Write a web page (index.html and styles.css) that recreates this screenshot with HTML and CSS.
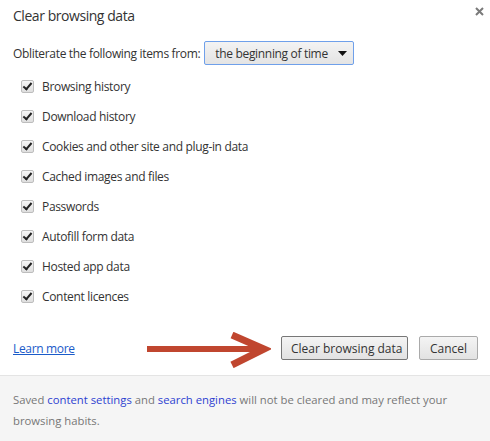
FILE: index.html
```html
<!DOCTYPE html>
<html>
<head>
<meta charset="utf-8">
<link rel="stylesheet" href="styles.css">
</head>
<body>
<div class="dialog">
  <div class="header">
    <h1 class="title">Clear browsing data</h1>
    <span class="close"><svg width="9" height="9" viewBox="0 0 9 9"><path d="M1 1L8 8M8 1L1 8" stroke="#7a7a7a" stroke-width="2"/></svg></span>
  </div>
  <div class="content">
    <div class="range">
      <span>Obliterate the following items from:</span>
      <span class="select">the beginning of time<svg class="caret" width="9" height="5" viewBox="0 0 9 5"><path d="M0 0H9L4.5 5Z" fill="#111"/></svg></span>
    </div>
    <ul class="items">
      <li><span class="cb"></span>Browsing history</li>
      <li><span class="cb"></span>Download history</li>
      <li><span class="cb"></span>Cookies and other site and plug-in data</li>
      <li><span class="cb"></span>Cached images and files</li>
      <li><span class="cb"></span>Passwords</li>
      <li><span class="cb"></span>Autofill form data</li>
      <li><span class="cb"></span>Hosted app data</li>
      <li><span class="cb"></span>Content licences</li>
    </ul>
    <div class="actions">
      <a class="learn" href="#">Learn more</a>
      <svg class="arrow" width="124" height="36" viewBox="0 0 124 36"><path d="M0 17H116" stroke="#c0462f" stroke-width="6"/><path d="M85 3L117 17L85 33" fill="none" stroke="#c0462f" stroke-width="7"/></svg>
      <button class="btn primary">Clear browsing data</button>
      <button class="btn">Cancel</button>
    </div>
  </div>
  <div class="note"><p class="note-text">Saved <a href="#">content settings</a> and <a href="#">search engines</a> will not be cleared and may reflect your<br>browsing habits.</p></div>
</div>
</body>
</html>
```
FILE: styles.css
```css
html, body {
  margin: 0;
  padding: 0;
  background: #fff;
}
body {
  font-family: "Open Sans", "Noto Sans", sans-serif;
  font-size: 12px;
  letter-spacing: -0.33px;
  color: #333;
}
.dialog {
  width: 490px;
  height: 441px;
  display: flex;
  flex-direction: column;
}
.header {
  height: 34px;
  display: flex;
  justify-content: space-between;
  padding: 0 6px 0 13px;
}
.title {
  margin: 0;
  font-weight: normal;
  font-size: 14px;
  letter-spacing: -0.45px;
  line-height: 32px;
  color: #333;
}
.close {
  padding-top: 3px;
}
.content {
  padding: 0 12px 0 13px;
  flex: 1;
  display: flex;
  flex-direction: column;
}
.range {
  display: flex;
  align-items: center;
  gap: 4px;
  height: 24px;
  margin-top: 7px;
}
.select {
  display: inline-flex;
  align-items: center;
  gap: 10px;
  height: 22px;
  padding: 0 6px 0 10px;
  border: 1px solid #6fa0ea;
  border-radius: 2px;
  background: linear-gradient(#f3f3f3, #e4e4e4);
  color: #333;
}
.items {
  list-style: none;
  margin: 6px 0 0;
  padding: 0 0 0 8px;
}
.items li {
  height: 30px;
  display: flex;
  align-items: center;
  gap: 8px;
}
.cb {
  width: 11px;
  height: 11px;
  border: 1px solid #bdbdbd;
  border-radius: 2px;
  background: linear-gradient(#f6f6f6, #dedede);
  position: relative;
}
.cb::after {
  content: "";
  position: absolute;
  left: 3px;
  top: 0px;
  width: 3px;
  height: 7px;
  border: solid #222;
  border-width: 0 2.5px 2.5px 0;
  transform: rotate(40deg);
}
.actions {
  display: flex;
  align-items: center;
  height: 24px;
  margin-top: 25px;
}
.learn {
  color: #1a5bc9;
  text-decoration: underline;
  white-space: nowrap;
}
.arrow {
  flex-shrink: 0;
  margin-left: auto;
  margin-top: 4px;
}
.btn {
  font: inherit;
  color: #333;
  height: 24px;
  border: 1px solid #aaa;
  border-radius: 2px;
  background: linear-gradient(#f4f4f4, #e2e2e2);
  padding: 0 9px;
  white-space: nowrap;
  flex-shrink: 0;
}
.btn.primary {
  border-color: #777;
  width: 127px;
  margin-left: 10px;
}
.btn + .btn {
  width: 59px;
  margin-left: 11px;
}
.note {
  height: 66px;
  box-sizing: border-box;
  border-top: 1px solid #e4e4e4;
  background: #f5f5f5;
  padding: 13px 13px 0;
  color: #777;
}
.note-text {
  margin: 0;
  font-size: 11.3px;
  letter-spacing: 0;
  line-height: 21px;
}
.note a {
  color: #2d3fd1;
  text-decoration: none;
}
```
